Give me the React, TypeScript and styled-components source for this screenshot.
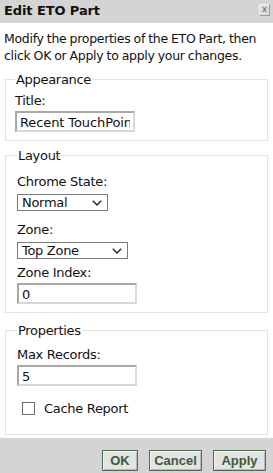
import styled, { createGlobalStyle } from "styled-components";

const Global = createGlobalStyle`
  html, body {
    margin: 0;
    padding: 0;
    background: #fff;
  }
  body {
    font-family: "DejaVu Sans", Verdana, sans-serif;
    font-size: 13px;
    letter-spacing: -0.3px;
    color: #111;
  }
`;

const Dialog = styled.div`
  width: 273px;
  height: 473px;
  display: flex;
  flex-direction: column;
  background: #fff;
  overflow: hidden;
`;

const TitleBar = styled.div`
  height: 23px;
  flex: none;
  background: #d4d4d4;
  display: flex;
  align-items: center;
  justify-content: space-between;
  padding: 0 3px 0 4px;
  box-sizing: border-box;
`;

const Heading = styled.span`
  font-weight: bold;
  font-size: 13px;
  letter-spacing: -0.1px;
  color: #111;
  margin-top: -2px;
`;

const CloseBox = styled.span`
  width: 11px;
  height: 12px;
  margin-top: -3px;
  box-sizing: border-box;
  border: 1px solid #f4f4f4;
  border-right-color: #9a9a9a;
  border-bottom-color: #9a9a9a;
  background: #dcdcdc;
  color: #555;
  font-family: "Liberation Sans", Arial, sans-serif;
  font-size: 9px;
  line-height: 9px;
  letter-spacing: 0;
  display: flex;
  justify-content: center;
`;

const Body = styled.div`
  flex: 1;
  padding: 7px 5px 0 5px;
  display: flex;
  flex-direction: column;
  gap: 7px;
`;

const Intro = styled.p`
  margin: 0 0 1px -1px;
  font-size: 12.5px;
  line-height: 17px;
  word-spacing: -0.5px;
`;

const Group = styled.fieldset<{ $inset: number; $bottom: number; $top?: number }>`
  margin: ${(p) => p.$top ?? 0}px 0 0;
  border: 1px solid #e2e2e2;
  padding: 2px 6px ${(p) => p.$bottom}px ${(p) => p.$inset}px;
  display: flex;
  flex-direction: column;
  align-items: flex-start;
`;

const Legend = styled.legend`
  padding: 0 1px;
  margin-left: 0;
`;

const Field = styled.div<{ $top: number }>`
  display: flex;
  flex-direction: column;
  gap: 2px;
  margin-top: ${(p) => p.$top}px;
`;

const Label = styled.label`
  line-height: 17px;
`;

const TextBox = styled.input`
  width: 120px;
  height: 21px;
  box-sizing: border-box;
  margin: 0;
  padding: 1px 3px 0;
  border: 2px solid #a8a8a8;
  border-right-color: #d8d8d8;
  border-bottom-color: #d8d8d8;
  font: inherit;
  letter-spacing: -0.1px;
  color: #111;
  outline: none;
`;

const SelectBox = styled.div<{ $w: number }>`
  width: ${(p) => p.$w}px;
  height: 17px;
  margin-top: 2px;
  box-sizing: border-box;
  border: 1px solid #7a7a7a;
  display: flex;
  align-items: center;
  justify-content: space-between;
  padding: 0 5px 0 4px;
  line-height: 15px;
`;

const Chevron = () => (
  <svg width="10" height="6" viewBox="0 0 10 6">
    <path d="M0.8 0.8l4.2 4.2 4.2-4.2" fill="none" stroke="#222" strokeWidth="1.4" />
  </svg>
);

const CheckRow = styled.label`
  display: flex;
  align-items: center;
  gap: 9px;
  margin: 15px 0 0 5px;
`;

const Box = styled.span`
  width: 13px;
  height: 13px;
  box-sizing: border-box;
  border: 1px solid #6e6e6e;
  background: #fff;
`;

const Footer = styled.div`
  height: 35px;
  flex: none;
  background: #d4d4d4;
  display: flex;
  justify-content: flex-end;
  align-items: flex-end;
  gap: 11px;
  padding: 0 7px 2px 0;
  box-sizing: border-box;
`;

const Btn = styled.button<{ $w: number }>`
  width: ${(p) => p.$w}px;
  height: 21px;
  box-sizing: border-box;
  margin: 0;
  padding: 0;
  border: 1px solid #4f6b4f;
  box-shadow: inset 1px 1px 0 #f6f6f6, inset -1px -1px 0 #b9b9b9;
  background: #e3e3e3;
  color: #3d5a3d;
  font-family: "Liberation Sans", Arial, sans-serif;
  font-weight: bold;
  font-size: 13px;
  letter-spacing: 0;
`;

export default function App() {
  return (
    <Dialog>
      <Global />
      <TitleBar>
        <Heading>Edit ETO Part</Heading>
        <CloseBox>x</CloseBox>
      </TitleBar>
      <Body>
        <Intro>
          Modify the properties of the ETO Part, then click OK or Apply to
          apply your changes.
        </Intro>
        <Group $inset={9} $bottom={8}>
          <Legend>Appearance</Legend>
          <Field $top={3}>
            <Label>Title:</Label>
            <TextBox defaultValue="Recent TouchPoints" />
          </Field>
        </Group>
        <Group $inset={11} $bottom={8}>
          <Legend>Layout</Legend>
          <Field $top={8}>
            <Label>Chrome State:</Label>
            <SelectBox $w={91}>
              Normal
              <Chevron />
            </SelectBox>
          </Field>
          <Field $top={10}>
            <Label>Zone:</Label>
            <SelectBox $w={111}>
              Top Zone
              <Chevron />
            </SelectBox>
          </Field>
          <Field $top={5}>
            <Label>Zone Index:</Label>
            <TextBox defaultValue="0" />
          </Field>
        </Group>
        <Group $inset={11} $bottom={18} $top={3}>
          <Legend>Properties</Legend>
          <Field $top={6}>
            <Label>Max Records:</Label>
            <TextBox defaultValue="5" />
          </Field>
          <CheckRow>
            <Box />
            Cache Report
          </CheckRow>
        </Group>
      </Body>
      <Footer>
        <Btn $w={36}>OK</Btn>
        <Btn $w={53}>Cancel</Btn>
        <Btn $w={53}>Apply</Btn>
      </Footer>
    </Dialog>
  );
}
